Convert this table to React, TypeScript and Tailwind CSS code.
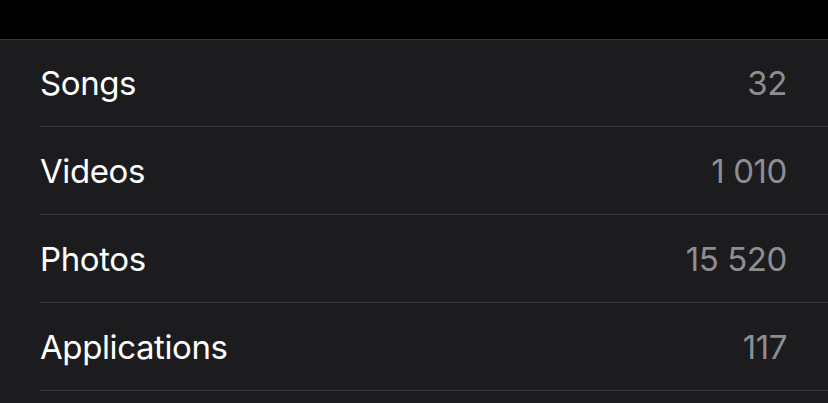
export default function App() {
  const rows = [
    ["Songs", "32"],
    ["Videos", "1 010"],
    ["Photos", "15 520"],
    ["Applications", "117"],
  ];
  return (
    <div className="w-[828px] h-[403px] overflow-hidden bg-[#1c1c1e]" style={{ fontFamily: "Inter, 'Noto Sans', sans-serif" }}>
      <div className="h-[39px] bg-black" />
      <div className="border-t border-[#38383a]">
        <div className="pl-[40px]">
          {rows.map(([l, r], i) => (
            <div
              key={l}
              className={`flex items-center justify-between pr-[41px] pt-[2px] border-b border-[#38383a] ${i === 0 ? "h-[87px]" : "h-[88px]"}`}
            >
              <span className="text-[33px] text-white tracking-[-0.4px]">{l}</span>
              <span className="text-[33px] text-[#8d8d92] tracking-[-0.4px]">{r}</span>
            </div>
          ))}
        </div>
      </div>
    </div>
  );
}
